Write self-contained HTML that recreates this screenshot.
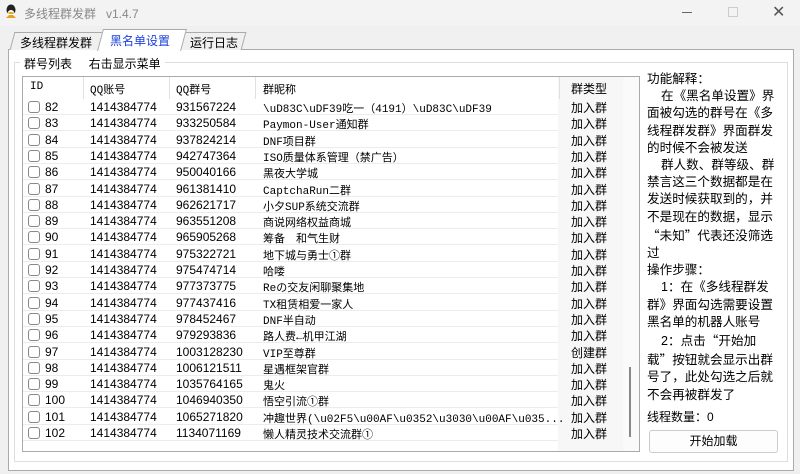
<!DOCTYPE html>
<html><head><meta charset="utf-8"><style>
*{margin:0;padding:0;box-sizing:border-box}
body{width:800px;height:474px;background:#f0f0f0;font-family:"Liberation Sans","Noto Sans CJK SC",sans-serif;font-size:12px;color:#000;position:relative;overflow:hidden}
.a{position:absolute;white-space:nowrap}
.mono{font-family:"Liberation Mono","Noto Sans CJK SC",monospace;font-size:11px}
.row{position:absolute;left:0;width:535px;height:16px;border-bottom:1px solid #ececec}
.cb{position:absolute;left:5px;top:2px;width:12px;height:12px;border:1px solid #888;border-radius:3px;background:#fff}
.q{font-family:"Noto Sans CJK SC",sans-serif}
</style></head><body>
<div class="a" style="left:0;top:0;width:800px;height:26px;background:#f3f3f3"></div>
<svg class="a" style="left:4px;top:4px" width="14" height="16" viewBox="0 0 14 16"><ellipse cx="7" cy="6" rx="4.5" ry="5.5" fill="#222"/><ellipse cx="7" cy="10" rx="3.5" ry="4" fill="#fff"/><path d="M2 14 L5 11 L9 11 L12 14Z" fill="#e8a020"/><ellipse cx="7" cy="9" rx="3" ry="1" fill="#e8a020"/></svg>
<div class="a" style="left:24px;top:5px;color:#888;font-size:12px">多线程群发群 &nbsp;&nbsp;v1.4.7</div>
<div class="a" style="left:682px;top:12px;width:10px;height:1px;background:#666"></div>
<div class="a" style="left:728px;top:7px;width:10px;height:10px;border:1px solid #ccc"></div>
<div class="a" style="left:772px;top:2px;font-size:16px;color:#555">✕</div>
<div class="a" style="left:8px;top:49px;width:786px;height:422px;background:#fff;border:1px solid #aaa"></div>
<div class="a" style="left:12px;top:32px;width:90px;height:18px;background:#f0f0f0;border:1px solid #aaa;border-bottom:none;transform:skewX(-15deg)"></div>
<div class="a" style="left:20px;top:34px;font-size:12px">多线程群发群</div>
<div class="a" style="left:182px;top:32px;width:62px;height:18px;background:#f0f0f0;border:1px solid #aaa;border-bottom:none;transform:skewX(-15deg)"></div>
<div class="a" style="left:190px;top:34px;font-size:12px">运行日志</div>
<div class="a" style="left:100px;top:29px;width:84px;height:22px;background:#fff;border:1px solid #aaa;border-bottom:none;transform:skewX(-15deg)"></div>
<div class="a" style="left:110px;top:32px;font-size:12px;color:#1a3fd8">黑名单设置</div>
<div class="a" style="left:14px;top:62px;width:774px;height:400px;border:1px solid #ddd"></div>
<div class="a" style="left:20px;top:55px;background:#fff;padding:0 4px">群号列表 &nbsp;&nbsp;&nbsp;&nbsp;右击显示菜单</div>
<div class="a" style="left:22px;top:76px;width:618px;height:376px;border:1px solid #aaa;background:#fff;overflow:hidden">
<div class="a" style="left:535px;top:0;width:65px;height:376px;background:#f7f7f7"></div>
<div class="a" style="left:600px;top:0;width:17px;height:376px;background:#fafafa"></div>
<div class="a" style="left:606px;top:290px;width:2px;height:70px;background:#888"></div>
<div class="a" style="left:60px;top:0;height:22px;border-left:1px solid #e0e0e0"></div>
<div class="a" style="left:146px;top:0;height:22px;border-left:1px solid #e0e0e0"></div>
<div class="a" style="left:232px;top:0;height:22px;border-left:1px solid #e0e0e0"></div>
<div class="a" style="left:536px;top:0;height:22px;border-left:1px solid #e0e0e0"></div>
<div class="a mono" style="left:7px;top:4px">ID</div>
<div class="a mono" style="left:67px;top:4px">QQ账号</div>
<div class="a mono" style="left:153px;top:4px">QQ群号</div>
<div class="a mono" style="left:240px;top:4px">群昵称</div>
<div class="a" style="left:548px;top:3px">群类型</div>
<div id="rows"></div>
</div>
<script>
var d=[["82","931567224","\\uD83C\\uDF39吃一（4191）\\uD83C\\uDF39"],["83","933250584","Paymon-User通知群"],["84","937824214","DNF项目群"],["85","942747364","ISO质量体系管理（禁广告）"],["86","950040166","黑夜大学城"],["87","961381410","CaptchaRun二群"],["88","962621717","小夕SUP系统交流群"],["89","963551208","商说网络权益商城"],["90","965905268","筹备　和气生财"],["91","975322721","地下城与勇士①群"],["92","975474714","哈喽"],["93","977373775","Reの交友闲聊聚集地"],["94","977437416","TX租赁相爱一家人"],["95","978452467","DNF半自动"],["96","979293836","路人费←机甲江湖"],["97","1003128230","VIP至尊群"],["98","1006121511","星遇框架官群"],["99","1035764165","鬼火"],["100","1046940350","悟空引流①群"],["101","1065271820","冲趣世界(\\u02F5\\u00AF\\u0352\\u3030\\u00AF\\u035..."],["102","1134071169","懒人精灵技术交流群①"]];
var h="";d.forEach(function(r,i){var t=22+i*16.3;h+='<div class="row" style="top:'+t+'px"><div class="cb"></div><div class="a" style="left:22px;top:1px">'+r[0]+'</div><div class="a" style="left:67px;top:1px">1414384774</div><div class="a" style="left:153px;top:1px">'+r[1]+'</div><div class="a mono" style="left:240px;top:1px">'+r[2]+'</div></div><div class="a" style="left:548px;top:'+(t)+'px">'+(r[0]=="97"?"创建群":"加入群")+'</div>';});
document.getElementById("rows").innerHTML=h;
</script>
<div class="a" style="left:647px;top:71px;line-height:17.2px;font-size:12.6px">功能解释：<br>&nbsp;&nbsp;&nbsp;&nbsp;在《黑名单设置》界<br>面被勾选的群号在《多<br>线程群发群》界面群发<br>的时候不会被发送<br>&nbsp;&nbsp;&nbsp;&nbsp;群人数、群等级、群<br>禁言这三个数据都是在<br>发送时候获取到的，并<br>不是现在的数据，显示<br><span class="q">“</span>未知<span class="q">”</span>代表还没筛选<br>过<br>操作步骤：<br>&nbsp;&nbsp;&nbsp;&nbsp;1：在《多线程群发<br>群》界面勾选需要设置<br>黑名单的机器人账号<br>&nbsp;&nbsp;&nbsp;&nbsp;2：点击<span class="q">“</span>开始加<br>载<span class="q">”</span>按钮就会显示出群<br>号了，此处勾选之后就<br>不会再被群发了</div>
<div class="a" style="left:647px;top:408px">线程数量：0</div>
<div class="a" style="left:649px;top:430px;width:129px;height:23px;border:1px solid #ccc;border-radius:3px;background:#fdfdfd;text-align:center;line-height:21px">开始加载</div>
</body></html>
